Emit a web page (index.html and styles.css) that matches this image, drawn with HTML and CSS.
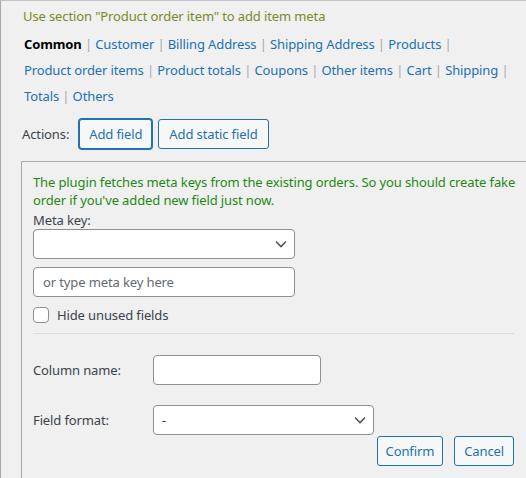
FILE: index.html
```html
<!DOCTYPE html>
<html>
<head>
<meta charset="utf-8">
<link rel="stylesheet" href="styles.css">
</head>
<body>
<div class="page">
  <p class="hint">Use section "Product order item" to add item meta</p>
  <ul class="tabs">
    <li><span class="tab current">Common</span> <span class="sep">|</span></li>
    <li><a class="tab">Customer</a> <span class="sep">|</span></li>
    <li><a class="tab">Billing Address</a> <span class="sep">|</span></li>
    <li><a class="tab">Shipping Address</a> <span class="sep">|</span></li>
    <li><a class="tab">Products</a> <span class="sep">|</span></li>
    <li><a class="tab">Product order items</a> <span class="sep">|</span></li>
    <li><a class="tab">Product totals</a> <span class="sep">|</span></li>
    <li><a class="tab">Coupons</a> <span class="sep">|</span></li>
    <li><a class="tab">Other items</a> <span class="sep">|</span></li>
    <li><a class="tab">Cart</a> <span class="sep">|</span></li>
    <li><a class="tab">Shipping</a> <span class="sep">|</span></li>
    <li><a class="tab">Totals</a> <span class="sep">|</span></li>
    <li><a class="tab">Others</a></li>
  </ul>
  <div class="actions">
    <span class="actions-label">Actions:</span>
    <button class="btn focused">Add field</button>
    <button class="btn">Add static field</button>
  </div>
  <div class="box">
    <p class="notice">The plugin fetches meta keys from the existing orders. So you should create fake order if you've added new field just now.</p>
    <label class="field-label">Meta key:</label>
    <div class="select-wrap wide">
      <select class="select"><option></option></select>
      <svg class="chev" width="12" height="8" viewBox="0 0 12 8"><path d="M1 1.5 L6 6.5 L11 1.5" fill="none" stroke="#50575e" stroke-width="1.6"/></svg>
    </div>
    <input class="input wide meta-input" type="text" placeholder="or type meta key here">
    <label class="check"><input type="checkbox" class="cb"><span>Hide unused fields</span></label>
    <hr class="rule">
    <div class="form-grid">
      <span class="row-label">Column name:</span>
      <input class="input col-input" type="text">
      <span class="row-label">Field format:</span>
      <div class="select-wrap fmt">
        <select class="select"><option>-</option></select>
        <svg class="chev" width="12" height="8" viewBox="0 0 12 8"><path d="M1 1.5 L6 6.5 L11 1.5" fill="none" stroke="#50575e" stroke-width="1.6"/></svg>
      </div>
    </div>
    <div class="confirm-row">
      <button class="btn small">Confirm</button>
      <button class="btn small cancel">Cancel</button>
    </div>
  </div>
</div>
</body>
</html>
```
FILE: styles.css
```css
html, body {
  margin: 0;
  padding: 0;
  background: #f0f0f1;
  overflow: hidden;
}
body {
  font-family: "Noto Sans", "Open Sans", sans-serif;
  font-size: 13px;
  letter-spacing: -0.12px;
  color: #3c434a;
}
.page {
  height: 478px;
  box-sizing: border-box;
  border-top: 1px solid #c3c4c7;
  border-left: 1px solid #a7aaad;
  padding: 6px 0 0 20px;
  overflow: hidden;
}
.hint {
  margin: 0 0 0 2px;
  color: #7a8a1e;
  line-height: 18px;
}
.tabs {
  list-style: none;
  margin: 6px 0 0 3px;
  padding: 0 12px 0 0;
  line-height: 26px;
}
.tabs li {
  display: inline;
  white-space: nowrap;
}
.tab {
  color: #2271b1;
  text-decoration: none;
}
.tab.current {
  color: #000;
  font-weight: 700;
}
.sep {
  color: #a7aaad;
}
.actions {
  display: flex;
  align-items: center;
  gap: 6px;
  margin-top: 10px;
  margin-left: 1px;
}
.actions-label {
  margin-right: 4px;
}
.btn {
  font-family: inherit;
  font-size: 13px;
  letter-spacing: -0.12px;
  color: #2271b1;
  background: #f6f7f7;
  border: 1px solid #2271b1;
  border-radius: 3px;
  height: 30px;
  padding: 0 10px;
  line-height: 28px;
  cursor: pointer;
}
.btn.focused {
  box-shadow: 0 0 0 1px #2271b1;
  padding: 0 9px;
}
.btn.small {
  padding: 0 8px;
}
.btn.small.cancel {
  padding: 0 9px;
}
.box {
  margin-top: 12px;
  border: 1px solid #a7aaad;
  border-right: none;
  border-bottom: none;
  padding: 11px 12px 20px 11px;
}
.notice {
  margin: 0 -8px 0 0;
  color: #1f8a12;
  line-height: 18px;
}
.field-label {
  display: block;
  line-height: 18px;
  margin-top: 2px;
}
.select-wrap {
  position: relative;
  height: 30px;
  box-sizing: border-box;
}
.wide {
  width: 262px;
}
.select {
  appearance: none;
  -webkit-appearance: none;
  width: 100%;
  height: 30px;
  box-sizing: border-box;
  border: 1px solid #8c8f94;
  border-radius: 4px;
  background: #fff;
  font-family: inherit;
  font-size: 13px;
  color: #2c3338;
  padding: 0 24px 0 8px;
  margin: 0;
}
.chev {
  position: absolute;
  right: 8px;
  top: 11px;
  pointer-events: none;
}
.input {
  display: block;
  height: 30px;
  box-sizing: border-box;
  border: 1px solid #8c8f94;
  border-radius: 4px;
  background: #fff;
  font-family: inherit;
  font-size: 13px;
  letter-spacing: -0.12px;
  padding: 0 9px;
  margin: 0;
  color: #2c3338;
}
.meta-input {
  margin-top: 8px;
}
.input::placeholder {
  color: #646970;
}
.check {
  display: flex;
  align-items: center;
  gap: 8px;
  margin-top: 9px;
}
.cb {
  appearance: none;
  -webkit-appearance: none;
  width: 16px;
  height: 16px;
  margin: 0;
  border: 1px solid #8c8f94;
  border-radius: 4px;
  background: #fff;
}
.rule {
  border: none;
  border-top: 1px solid #dcdcde;
  margin: 9px 0 0 0;
}
.form-grid {
  display: grid;
  grid-template-columns: 120px auto;
  row-gap: 20px;
  align-items: center;
  justify-items: start;
  margin-top: 21px;
}
.col-input {
  width: 168px;
}
.fmt {
  width: 221px;
}
.confirm-row {
  display: flex;
  justify-content: flex-end;
  gap: 11px;
  margin-top: 1px;
}
```
